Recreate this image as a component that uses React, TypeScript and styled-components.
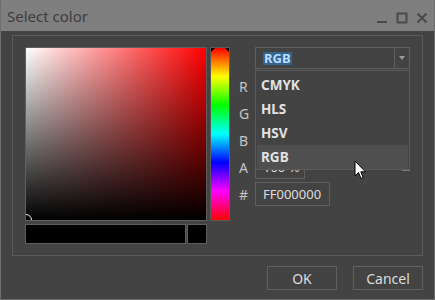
import React from "react";
import styled, { createGlobalStyle } from "styled-components";

const Global = createGlobalStyle`
  html, body { margin: 0; padding: 0; background: #434343; }
  body { font-family: "Noto Sans", "Open Sans", sans-serif; }
  * { box-sizing: border-box; }
`;

const Window = styled.div`
  position: relative;
  width: 435px;
  height: 300px;
  background: #434343;
  border: 1px solid #6e6e6e;
  border-top: none;
  display: flex;
  flex-direction: column;
  overflow: hidden;
`;

const TitleBar = styled.div`
  height: 31px;
  background: #7f7f7f;
  display: flex;
  align-items: center;
  padding: 0 6px 0 6px;
  flex-shrink: 0;
`;

const Title = styled.div`
  flex: 1;
  font-size: 15px;
  color: #3e3e3e;
  margin-top: 0px;
`;

const TitleButtons = styled.div`
  display: flex;
  align-items: center;
  gap: 8px;
  margin-top: 4px;
`;

const Body = styled.div`
  flex: 1;
  display: flex;
  flex-direction: column;
  padding: 4px 11px 0 11px;
`;

const Panel = styled.div`
  height: 221px;
  border: 1px solid #5b5b5b;
  display: flex;
  padding: 11px 0 0 12px;
`;

const ColorColumn = styled.div`
  width: 182px;
  display: flex;
  flex-direction: column;
  gap: 3px;
`;

const Square = styled.div`
  position: relative;
  height: 174px;
  border: 1px solid #5f5f5f;
  background: linear-gradient(to bottom, rgba(0,0,0,0), #000),
    linear-gradient(to right, #fff, rgba(255,255,255,0)), #ff0000;
  overflow: hidden;
`;

const Selector = styled.div`
  position: absolute;
  left: -6px;
  bottom: -6px;
  width: 12px;
  height: 12px;
  border-radius: 50%;
  border: 1.5px solid #f0f0f0;
`;

const PreviewRow = styled.div`
  display: flex;
  gap: 1px;
  height: 20px;
`;

const Swatch = styled.div<{ $w?: number }>`
  ${(p) => (p.$w ? `width: ${p.$w}px;` : "flex: 1;")}
  background: #000;
  border: 1px solid #5f5f5f;
`;

const HueBar = styled.div`
  position: relative;
  margin-left: 3px;
  width: 20px;
  height: 174px;
  border: 1px solid #5a5a5a;
  background: linear-gradient(
    to bottom,
    #ff0000 0%,
    #ffff00 16.6%,
    #00ff00 33.3%,
    #00ffff 50%,
    #0000ff 66.6%,
    #ff00ff 83.3%,
    #ff0000 100%
  );
  &::before,
  &::after {
    content: "";
    position: absolute;
    top: 0;
    width: 0;
    height: 0;
    border-top: 4px solid #000;
  }
  &::before {
    left: 0;
    border-right: 4px solid transparent;
  }
  &::after {
    right: 0;
    border-left: 4px solid transparent;
  }
`;

const Controls = styled.div`
  position: relative;
  margin-left: 10px;
  display: grid;
  grid-template-columns: 15px 155px;
  grid-auto-rows: 24px;
  row-gap: 3px;
  align-items: center;
`;

const Combo = styled.div`
  grid-column: 2;
  height: 22px;
  margin-bottom: 9px;
  align-self: start;
  border: 1px solid #5f5f5f;
  display: flex;
  align-items: stretch;
`;

const ComboText = styled.div`
  flex: 1;
  display: flex;
  align-items: center;
  padding-left: 7px;
`;

const Highlight = styled.span`
  background: #33638f;
  color: #b9ddff;
  font-size: 13px;
  font-weight: 700;
  line-height: 13px;
  padding: 0 1px;
`;

const ComboArrow = styled.div`
  width: 15px;
  border-left: 1px solid #5f5f5f;
  display: flex;
  align-items: center;
  justify-content: center;
  &::after {
    content: "";
    border-left: 3px solid transparent;
    border-right: 3px solid transparent;
    border-top: 4px solid #9a9a9a;
  }
`;

const Label = styled.div`
  font-size: 14px;
  color: #c4c4c4;
  grid-column: 1;
  margin-left: -1px;
`;

const Field = styled.div`
  display: flex;
  align-items: center;
  gap: 5px;
  grid-column: 2;
`;

const TextBox = styled.div<{ $w: number }>`
  width: ${(p) => p.$w}px;
  height: 24px;
  border: 1px solid #5f5f5f;
  color: #dedede;
  font-size: 13px;
  display: flex;
  align-items: center;
  padding-left: 7px;
`;

const Slider = styled.div`
  position: relative;
  flex: 1;
  height: 3px;
  background: #5c5c5c;
  display: flex;
  justify-content: flex-end;
  align-items: center;
`;

const Thumb = styled.div`
  width: 8px;
  height: 8px;
  background: #7b7b7b;
`;

const DropList = styled.div`
  position: absolute;
  left: 15px;
  top: 23px;
  width: 155px;
  height: 100px;
  border: 1px solid #5b5b5b;
  background: #434343;
  padding: 2px 1px 0 1px;
  display: flex;
  flex-direction: column;
`;

const Item = styled.div<{ $hover?: boolean }>`
  height: 24px;
  display: flex;
  align-items: center;
  padding-left: 4px;
  font-size: 13.5px;
  font-weight: 700;
  color: #e2e2e2;
  background: ${(p) => (p.$hover ? "#4f4f4f" : "transparent")};
`;

const Footer = styled.div`
  display: flex;
  justify-content: flex-end;
  gap: 16px;
  margin-top: 10px;
`;

const Button = styled.div`
  width: 70px;
  height: 24px;
  border: 1px solid #5f5f5f;
  color: #dcdcdc;
  font-size: 14px;
  display: flex;
  align-items: center;
  justify-content: center;
`;

const Cursor = styled.svg`
  position: absolute;
  left: 353px;
  top: 160px;
`;

export default function App() {
  return (
    <>
      <Global />
      <Window>
        <TitleBar>
          <Title>Select color</Title>
          <TitleButtons>
            <svg width="12" height="12" viewBox="0 0 12 12">
              <rect x="1" y="9" width="10" height="2" fill="#4a4a4a" />
            </svg>
            <svg width="12" height="12" viewBox="0 0 12 12">
              <rect x="1.5" y="1.5" width="9" height="9" fill="none" stroke="#4a4a4a" strokeWidth="2" />
            </svg>
            <svg width="12" height="12" viewBox="0 0 12 12">
              <path d="M1.5 1.5 L10.5 10.5 M10.5 1.5 L1.5 10.5" stroke="#4a4a4a" strokeWidth="2" />
            </svg>
          </TitleButtons>
        </TitleBar>
        <Body>
          <Panel>
            <ColorColumn>
              <Square>
                <Selector />
              </Square>
              <PreviewRow>
                <Swatch />
                <Swatch $w={20} />
              </PreviewRow>
            </ColorColumn>
            <HueBar />
            <Controls>
              <Combo>
                <ComboText>
                  <Highlight>RGB</Highlight>
                </ComboText>
                <ComboArrow />
              </Combo>
              <Label>R</Label>
              <Field>
                <TextBox $w={50} />
              </Field>
              <Label>G</Label>
              <Field>
                <TextBox $w={50} />
              </Field>
              <Label>B</Label>
              <Field>
                <TextBox $w={50} />
              </Field>
              <Label>A</Label>
              <Field>
                <TextBox $w={50}>100 %</TextBox>
                <Slider>
                  <Thumb />
                </Slider>
              </Field>
              <Label>#</Label>
              <Field>
                <TextBox $w={75}>FF000000</TextBox>
              </Field>
              <DropList>
                <Item>CMYK</Item>
                <Item>HLS</Item>
                <Item>HSV</Item>
                <Item $hover>RGB</Item>
              </DropList>
            </Controls>
          </Panel>
          <Footer>
            <Button>OK</Button>
            <Button>Cancel</Button>
          </Footer>
        </Body>
        <Cursor width="14" height="21" viewBox="0 0 14 21">
          <path
            d="M1 1 L1 16 L4.5 12.5 L7 18.5 L9.2 17.6 L6.8 11.8 L11.5 11.8 Z"
            fill="#fff"
            stroke="#000"
            strokeWidth="1"
            strokeLinejoin="miter"
          />
        </Cursor>
      </Window>
    </>
  );
}
